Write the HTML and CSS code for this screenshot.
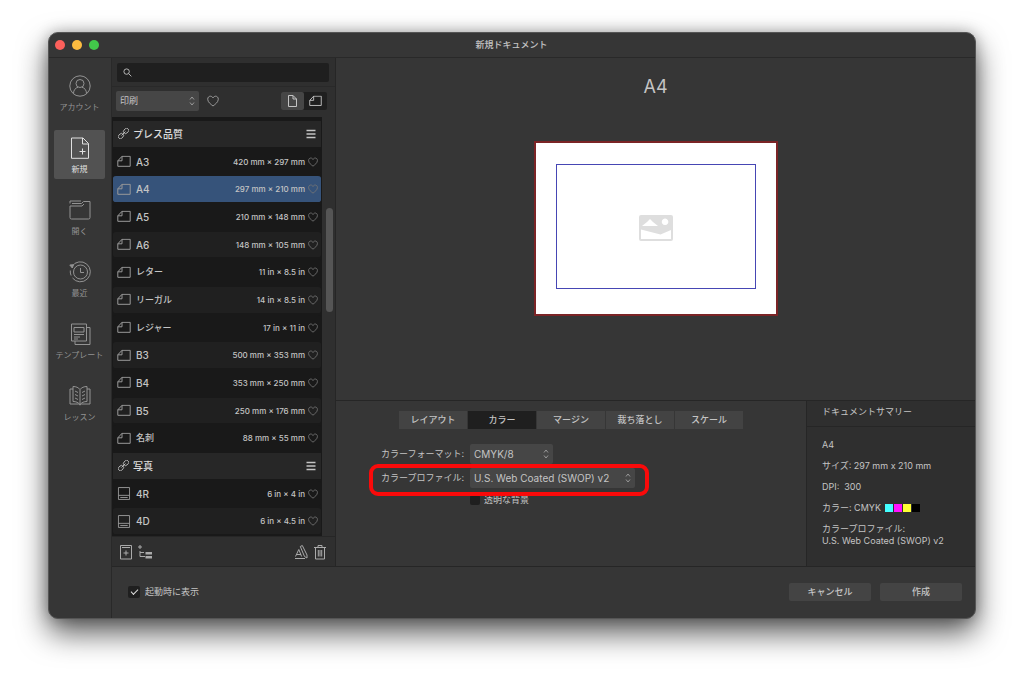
FILE: index.html
```
<!DOCTYPE html>
<html lang="ja">
  <head>
    <meta charset="UTF-8" />
    <meta name="viewport" content="width=device-width, initial-scale=1.0" />
    <title>新規ドキュメント</title>
    <link rel="stylesheet" href="styles.css">
  </head>
  <body>
    <!-- shared icons -->
    <svg class="sprite" aria-hidden="true">
      <symbol id="heart" viewBox="0 0 12 12">
        <path d="M6 11C4 9.400 .7 7.200 .7 4.200 .7 2.300 2 1.200 3.300 1.200c1.300 0 2.200.8 2.700 1.800.5-1 1.400-1.800 2.700-1.800C10 1.200 11.300 2.300 11.300 4.200c0 3-3.300 5.200-5.300 6.800z" />
      </symbol>
      <symbol id="landscape" viewBox="0 0 14 12">
        <path d="M5 .8h8.200v10H.8V5.300zM5 .8v4.500H.8" />
      </symbol>
      <symbol id="photo" viewBox="0 0 14 14">
        <path d="M1 .6h12v12.800H1zM1 9h12M3 11.300h8" />
      </symbol>
      <symbol id="link" viewBox="0 0 12 12">
        <g transform="rotate(-45 6 6)">
          <rect x="-1" y="3.800" width="6" height="4.400" rx="1.800" />
          <rect x="7" y="3.800" width="6" height="4.400" rx="1.800" />
          <path d="M3 6h6" />
        </g>
      </symbol>
      <symbol id="menu" viewBox="0 0 10 10">
        <path d="M.5 1.500h9M.5 5h9M.5 8.500h9" />
      </symbol>
    </svg>

    <div class="window">
      <header class="titlebar">
        <div class="lights">
          <span class="light close"></span>
          <span class="light minimize"></span>
          <span class="light zoom"></span>
        </div>
        <h1>新規ドキュメント</h1>
      </header>

      <div class="content">
        <nav class="sidebar">
          <button class="nav-item">
            <svg viewBox="0 0 22 22"><circle cx="11" cy="11" r="10.200" /><circle cx="11" cy="8.500" r="4" /><path d="M4.500 18.500c0-3.500 2-5.500 4.500-6.300M17.500 18.500c0-3.500-2-5.500-4.500-6.300" /></svg>
            アカウント
          </button>
          <button class="nav-item active">
            <svg viewBox="0 0 22 22"><path d="M2.500 1h11.500l5.500 5.500V21.300h-17zM13.500 1v6h6M13.500 11.500v6M10.500 14.500h6" /></svg>
            新規
          </button>
          <button class="nav-item">
            <svg viewBox="0 0 22 22"><path d="M1 4.500V2h11M3 4.500h9.500l2-2H21v16q0 1.500-1.500 1.500h-17Q1 20 1 18.500V7h12l2-2" /></svg>
            開く
          </button>
          <button class="nav-item">
            <svg viewBox="0 0 22 22"><circle cx="11.500" cy="11" r="7" /><path d="M11.500 7v4.500H15M3 5.300A10 10 0 1 1 3.500 17M1.300 9.500a10 10 0 0 0 .8 5" /><path d="M.8 4l3.700-.3L3.300 7z" fill="currentColor" /></svg>
            最近
          </button>
          <button class="nav-item">
            <svg viewBox="0 0 22 22"><path d="M2.500 1h15v17h-15zM5 4.500h10V9H5zM5 11.500h10M5 14h6M5 16h4M17.500 4.500h3.500v17H6V18" /></svg>
            テンプレート
          </button>
          <button class="nav-item">
            <svg viewBox="0 0 22 22"><path d="M11 4.500C9.500 2.500 7 1.500 4 1.500v15c3 0 5.500 1 7 3 1.500-2 4-3 7-3v-15c-3 0-5.500 1-7 3zM11 4.500v15M4 4H1v15h8.500l1.500 1 1.500-1H21V4h-3M6 6l3 1.500M6 9.500 9 11M6 13l3 1.500M16 6l-3 1.500M16 9.500 13 11M16 13l-3 1.500" /></svg>
            レッスン
          </button>
        </nav>

        <div class="workspace">
          <div class="upper">
            <section class="presets">
              <div class="search">
                <svg viewBox="0 0 10 10"><circle cx="4" cy="4" r="3" /><path d="M6.300 6.300 9.300 9.300" /></svg>
                <input type="search" aria-label="検索">
              </div>
              <div class="filter">
                <div class="select">
                  <select aria-label="カテゴリ">
                    <option>印刷</option>
                  </select>
                  <svg viewBox="0 0 6 10"><path d="M1 3.500l2-2.500 2 2.500M1 6.500l2 2.500 2-2.500" /></svg>
                </div>
                <button class="favorite" aria-label="お気に入り"><svg viewBox="0 0 12 12"><use href="#heart" /></svg></button>
                <div class="orientation">
                  <button class="on" aria-label="縦"><svg viewBox="0 0 12 14"><path d="M2 1.500h4.500l3.500 3.500v7.500H2zM6.500 1.500V5H10" /></svg></button>
                  <button aria-label="横"><svg viewBox="0 0 14 12"><use href="#landscape" /></svg></button>
                </div>
              </div>

              <div class="list-area">
                <ul class="list">
                  <li class="group"><svg class="link" viewBox="0 0 12 12"><use href="#link" /></svg><h2>プレス品質</h2><button class="menu" aria-label="メニュー"><svg viewBox="0 0 10 10"><use href="#menu" /></svg></button></li>
                  <li><svg class="page" viewBox="0 0 14 12"><use href="#landscape" /></svg><span class="name">A3</span><span class="size">420 mm × 297 mm</span><button class="like" aria-label="お気に入り"><svg viewBox="0 0 12 12"><use href="#heart" /></svg></button></li>
                  <li class="selected"><svg class="page" viewBox="0 0 14 12"><use href="#landscape" /></svg><span class="name">A4</span><span class="size">297 mm × 210 mm</span><button class="like" aria-label="お気に入り"><svg viewBox="0 0 12 12"><use href="#heart" /></svg></button></li>
                  <li><svg class="page" viewBox="0 0 14 12"><use href="#landscape" /></svg><span class="name">A5</span><span class="size">210 mm × 148 mm</span><button class="like" aria-label="お気に入り"><svg viewBox="0 0 12 12"><use href="#heart" /></svg></button></li>
                  <li><svg class="page" viewBox="0 0 14 12"><use href="#landscape" /></svg><span class="name">A6</span><span class="size">148 mm × 105 mm</span><button class="like" aria-label="お気に入り"><svg viewBox="0 0 12 12"><use href="#heart" /></svg></button></li>
                  <li><svg class="page" viewBox="0 0 14 12"><use href="#landscape" /></svg><span class="name jp">レター</span><span class="size">11 in × 8.5 in</span><button class="like" aria-label="お気に入り"><svg viewBox="0 0 12 12"><use href="#heart" /></svg></button></li>
                  <li><svg class="page" viewBox="0 0 14 12"><use href="#landscape" /></svg><span class="name jp">リーガル</span><span class="size">14 in × 8.5 in</span><button class="like" aria-label="お気に入り"><svg viewBox="0 0 12 12"><use href="#heart" /></svg></button></li>
                  <li><svg class="page" viewBox="0 0 14 12"><use href="#landscape" /></svg><span class="name jp">レジャー</span><span class="size">17 in × 11 in</span><button class="like" aria-label="お気に入り"><svg viewBox="0 0 12 12"><use href="#heart" /></svg></button></li>
                  <li><svg class="page" viewBox="0 0 14 12"><use href="#landscape" /></svg><span class="name">B3</span><span class="size">500 mm × 353 mm</span><button class="like" aria-label="お気に入り"><svg viewBox="0 0 12 12"><use href="#heart" /></svg></button></li>
                  <li><svg class="page" viewBox="0 0 14 12"><use href="#landscape" /></svg><span class="name">B4</span><span class="size">353 mm × 250 mm</span><button class="like" aria-label="お気に入り"><svg viewBox="0 0 12 12"><use href="#heart" /></svg></button></li>
                  <li><svg class="page" viewBox="0 0 14 12"><use href="#landscape" /></svg><span class="name">B5</span><span class="size">250 mm × 176 mm</span><button class="like" aria-label="お気に入り"><svg viewBox="0 0 12 12"><use href="#heart" /></svg></button></li>
                  <li><svg class="page" viewBox="0 0 14 12"><use href="#landscape" /></svg><span class="name jp">名刺</span><span class="size">88 mm × 55 mm</span><button class="like" aria-label="お気に入り"><svg viewBox="0 0 12 12"><use href="#heart" /></svg></button></li>
                  <li class="group"><svg class="link" viewBox="0 0 12 12"><use href="#link" /></svg><h2>写真</h2><button class="menu" aria-label="メニュー"><svg viewBox="0 0 10 10"><use href="#menu" /></svg></button></li>
                  <li><svg class="page" viewBox="0 0 14 14"><use href="#photo" /></svg><span class="name">4R</span><span class="size">6 in × 4 in</span><button class="like" aria-label="お気に入り"><svg viewBox="0 0 12 12"><use href="#heart" /></svg></button></li>
                  <li><svg class="page" viewBox="0 0 14 14"><use href="#photo" /></svg><span class="name">4D</span><span class="size">6 in × 4.5 in</span><button class="like" aria-label="お気に入り"><svg viewBox="0 0 12 12"><use href="#heart" /></svg></button></li>
                </ul>
                <div class="scroll">
                  <div class="thumb"></div>
                </div>
              </div>

              <div class="tools">
                <button aria-label="プリセットを追加"><svg viewBox="0 0 14 16"><path d="M1.500 1.500h11v13.500h-11zM3 3.500h8M7 6.500v5M4.500 9h5" /></svg></button>
                <button aria-label="カテゴリを追加"><svg viewBox="0 0 14 16"><path d="M2 1v4M0 3h4M2 7v5.500h5M2 8.500h4" /><path d="M7.500 8h6.500v2.500H7.500zM7.500 12H14v2.500H7.500z" fill="currentColor" stroke="none" /></svg></button>
                <button class="rename" aria-label="名前を変更"><svg viewBox="0 0 14 16"><path d="M1 14.500h10M1.500 12.500 4.800 5.500l2.800 7M2.500 10.500h4.500M6.300 2.500l2-1 4.700 9.500v3l-2.500-1.500z" /></svg></button>
                <button aria-label="削除"><svg viewBox="0 0 14 16"><path d="M1 3.500h12M5 3.500v-2h4v2M2.500 3.500v11.500h9V3.500M5.300 6v6.500M7 6v6.500M8.700 6v6.500" /></svg></button>
              </div>
            </section>

            <main class="main">
              <section class="preview">
                <h2>A4</h2>
                <div class="paper">
                  <div class="margins">
                    <svg viewBox="0 0 34 26"><path fill-rule="evenodd" d="M2 0h30q2 0 2 2v22q0 2-2 2H2q-2 0-2-2V2Q0 0 2 0zM3 11h16l-5-4-3-3-3 3zM26 3.500a3.300 3.300 0 1 0 .1 0zM2 14.500V24h30V15l-10.500 4.500z" /></svg>
                  </div>
                </div>
              </section>

              <div class="lower">
                <section class="settings">
                  <div class="tabs">
                    <button>レイアウト</button>
                    <button class="active">カラー</button>
                    <button>マージン</button>
                    <button>裁ち落とし</button>
                    <button>スケール</button>
                  </div>
                  <div class="form">
                    <label for="format">カラーフォーマット:</label>
                    <div class="select">
                      <select id="format">
                        <option>CMYK/8</option>
                      </select>
                      <svg viewBox="0 0 6 10"><path d="M1 3.500l2-2.500 2 2.500M1 6.500l2 2.500 2-2.500" /></svg>
                    </div>
                    <div class="profile">
                      <label for="profile">カラープロファイル:</label>
                      <div class="select wide">
                        <select id="profile">
                          <option>U.S. Web Coated (SWOP) v2</option>
                        </select>
                        <svg viewBox="0 0 6 10"><path d="M1 3.500l2-2.500 2 2.500M1 6.500l2 2.500 2-2.500" /></svg>
                      </div>
                      <span class="highlight"></span>
                    </div>
                    <div class="transparent">
                      <input type="checkbox" id="transparent">
                      <label for="transparent">透明な背景</label>
                    </div>
                  </div>
                </section>

                <aside class="summary">
                  <h2>ドキュメントサマリー</h2>
                  <div class="facts">
                    <p>A4</p>
                    <p>サイズ: 297 mm x 210 mm</p>
                    <p>DPI:&nbsp; 300</p>
                    <p class="colors">カラー: CMYK <span class="swatches"><i class="cyan"></i><i class="magenta"></i><i class="yellow"></i><i class="black"></i></span></p>
                    <p>カラープロファイル:<br>U.S. Web Coated (SWOP) v2</p>
                  </div>
                </aside>
              </div>
            </main>
          </div>

          <footer class="footer">
            <input type="checkbox" id="startup" checked>
            <label for="startup">起動時に表示</label>
            <button class="cancel">キャンセル</button>
            <button>作成</button>
          </footer>
        </div>
      </div>
    </div>
  </body>
</html>
```

FILE: styles.css
```
* {
  margin: 0;
  padding: 0;
  box-sizing: border-box;
}

body {
  display: flex;
  min-height: 100vh;
  padding: 32px 48px 64px;
  background: #fff;
  color: #c4c4c4;
  font-family: Inter, "Noto Sans CJK JP", sans-serif;
  font-size: 9px;
  line-height: 12px;
}
button,
input,
select {
  border: 0;
  outline: 0;
  background: none;
  color: inherit;
  font: inherit;
}
button {
  cursor: pointer;
}
svg {
  display: block;
  fill: none;
  stroke: currentColor;
  stroke-width: 1;
}
h1,
h2 {
  font-size: 9px;
  font-weight: 400;
}
.sprite {
  position: absolute;
  width: 0;
  height: 0;
}

.window {
  flex: 1;
  display: flex;
  flex-direction: column;
  min-width: 0;
  border: 1px solid #555;
  border-radius: 10px;
  background: #363636;
  box-shadow: 0 14px 30px rgba(0, 0, 0, 0.65), 0 0 14px rgba(0, 0, 0, 0.25);
  overflow: hidden;
}
.titlebar {
  display: grid;
  grid-template-columns: 1fr auto 1fr;
  align-items: center;
  height: 25px;
  padding: 0 7px 0 6px;
  border-bottom: 1px solid #292929;
}
.titlebar h1 {
  font-weight: 500;
}
.lights {
  display: flex;
  gap: 7px;
}
.light {
  width: 10px;
  height: 10px;
  border-radius: 50%;
}
.close {
  background: #fc605b;
}
.minimize {
  background: #fdbc40;
}
.zoom {
  background: #42c84a;
}
.content {
  flex: 1;
  display: flex;
}

/* left navigation */
.sidebar {
  display: flex;
  flex-direction: column;
  gap: 13px;
  width: 63px;
  padding: 10px 6px 10px 5px;
  border-right: 1px solid #292929;
}
.nav-item {
  display: flex;
  flex-direction: column;
  align-items: center;
  gap: 4px;
  height: 49px;
  padding-top: 7px;
  border-radius: 2px;
  color: #939393;
  font-size: 8px;
  line-height: 12px;
  white-space: nowrap;
}
.nav-item svg {
  width: 22px;
  height: 22px;
  flex-shrink: 0;
}
.nav-item.active {
  background: #525252;
  color: #e0e0e0;
}

.workspace {
  flex: 1;
  display: flex;
  flex-direction: column;
  min-width: 0;
}
.upper {
  flex: 1;
  display: flex;
}

/* preset list */
.presets {
  display: flex;
  flex-direction: column;
  width: 224px;
  border-right: 1px solid #262626;
  background: #2f2f2f;
}
.search {
  display: flex;
  align-items: center;
  gap: 6px;
  height: 19px;
  margin: 5px 6px 4px 5px;
  padding: 0 6px;
  border-radius: 2px;
  background: #1f1f1f;
}
.search svg {
  width: 9px;
  height: 9px;
}
.search input {
  flex: 1;
  min-width: 0;
}
.filter {
  display: flex;
  align-items: center;
  height: 31px;
  padding: 0 8px 2px 4px;
  border-top: 1px solid #292929;
}
.select {
  position: relative;
  width: 83px;
}
.select select {
  display: block;
  width: 100%;
  height: 20px;
  padding: 0 16px 0 4px;
  appearance: none;
  border-radius: 2px;
  background: #464646;
}
.select svg {
  position: absolute;
  top: 5px;
  right: 4px;
  width: 6px;
  height: 10px;
  color: #999;
  pointer-events: none;
}
.favorite {
  margin-left: 8px;
  color: #999;
}
.favorite svg {
  width: 12px;
  height: 12px;
}
.orientation {
  display: flex;
  margin-left: auto;
  border-radius: 2px;
  background: #1f1f1f;
}
.orientation button {
  display: flex;
  align-items: center;
  justify-content: center;
  width: 23px;
  height: 18px;
  border-radius: 2px;
}
.orientation svg {
  width: 13px;
  height: 14px;
}
.orientation .on {
  background: #464646;
}
.list-area {
  flex: 1;
  display: flex;
}
.list {
  flex: 1;
  display: flex;
  flex-direction: column;
  padding: 3px 1px 1px;
  background: #191919;
  list-style: none;
}
.list li {
  flex: 1 0 27px;
  display: flex;
  align-items: center;
  padding: 0 3px 0 4px;
  background: #202020;
  border-radius: 3px;
  background-clip: padding-box;
  border-top: 1px solid transparent;
  border-bottom: 1px solid transparent;
}
.list li:nth-child(even) {
  background-color: #191919;
}
.list li.group {
  gap: 4px;
  padding: 0 5px;
  border-radius: 0;
  background-color: #272727;
}
.list li.selected {
  background-color: #36537a;
}
.group h2 {
  flex: 1;
  font-size: 10px;
  font-weight: 500;
  color: #ddd;
}
.group .link {
  width: 11px;
  height: 11px;
}
.menu svg {
  width: 10px;
  height: 10px;
  stroke-width: 1.5;
}
.page {
  width: 14px;
  height: 13px;
  color: #999;
}
.name {
  flex: 1;
  margin-left: 5px;
  font-size: 10px;
  font-weight: 500;
}
.name.jp {
  font-size: 9px;
}
.size {
  margin-right: 3px;
  font-size: 8px;
  font-weight: 500;
}
.like {
  color: #777;
}
.like svg {
  width: 10px;
  height: 10px;
}
.scroll {
  width: 13px;
  padding: 91px 2px 0 4px;
}
.thumb {
  width: 7px;
  height: 104px;
  border-radius: 4px;
  background: #555;
}
.tools {
  display: flex;
  align-items: center;
  gap: 5px;
  height: 30px;
  padding: 0 8px 0 7px;
  border-top: 1px solid #262626;
  color: #aaa;
}
.tools svg {
  width: 14px;
  height: 16px;
}
.rename {
  margin-left: auto;
}

/* document preview */
.main {
  flex: 1;
  display: flex;
  flex-direction: column;
  min-width: 0;
}
.preview {
  flex: 1;
  display: flex;
  flex-direction: column;
  align-items: center;
  padding-top: 17px;
}
.preview h2 {
  margin-bottom: 42px;
  font-size: 18px;
  line-height: 24px;
}
.paper {
  width: 244px;
  height: 175px;
  padding: 21px 20px 25px;
  border: 2px solid #7b2426;
  background: #fff;
}
.margins {
  display: flex;
  align-items: center;
  justify-content: center;
  height: 100%;
  padding-top: 3px;
  border: 1px solid #4646b4;
}
.margins svg {
  width: 34px;
  height: 26px;
  fill: #dedede;
  stroke: none;
}

.lower {
  display: flex;
  height: 166px;
  border-top: 1px solid #262626;
}
.settings {
  flex: 1;
  display: flex;
  flex-direction: column;
  align-items: center;
  gap: 15px;
  padding-top: 10px;
}
.tabs {
  display: flex;
  gap: 1px;
}
.tabs button {
  width: 68px;
  height: 18px;
  background: #434343;
  font-weight: 500;
}
.tabs .active {
  background: #1f1f1f;
}
.form {
  display: grid;
  grid-template-columns: 87px 167px;
  column-gap: 6px;
  row-gap: 4px;
  align-items: center;
  width: 388px;
}
.form > label,
.profile label {
  text-align: right;
  white-space: nowrap;
}
.form select {
  font-size: 10px;
}
.form .wide {
  width: 165px;
}
.profile {
  position: relative;
  grid-column: 1 / 3;
  display: grid;
  grid-template-columns: subgrid;
  align-items: center;
}
/* red marker round the profile row */
.highlight {
  position: absolute;
  top: -4px;
  left: -8px;
  right: -12px;
  height: 32px;
  border: 4px solid #fa0a0a;
  border-radius: 9px;
  pointer-events: none;
}
.transparent {
  grid-column: 2;
  display: flex;
  align-items: center;
  gap: 4px;
  padding-top: 2px;
}
input[type="checkbox"] {
  width: 10px;
  height: 10px;
  appearance: none;
  border-radius: 2px;
  background: #1f1f1f;
}

/* summary */
.summary {
  width: 169px;
  border-left: 1px solid #262626;
  background: #2f2f2f;
}
.summary h2 {
  height: 26px;
  padding: 5px 15px;
  border-bottom: 1px solid #262626;
}
.facts {
  display: flex;
  flex-direction: column;
  gap: 9px;
  padding: 12px 15px;
}
.colors {
  display: flex;
  align-items: center;
  gap: 4px;
}
.swatches {
  display: flex;
  gap: 1px;
}
.swatches i {
  width: 8px;
  height: 8px;
}
.cyan {
  background: #4ff;
}
.magenta {
  background: #f1f;
}
.yellow {
  background: #ff3;
}
.black {
  background: #000;
}

/* bottom bar */
.footer {
  display: flex;
  align-items: center;
  height: 52px;
  padding: 0 13px 2px 16px;
  border-top: 1px solid #262626;
}
.footer input[type="checkbox"] {
  display: flex;
  align-items: center;
  justify-content: center;
  width: 12px;
  height: 12px;
  margin-right: 5px;
}
.footer input:checked::before {
  content: "";
  width: 6px;
  height: 3px;
  margin-bottom: 2px;
  border: solid #ddd;
  border-width: 0 0 1px 1px;
  transform: rotate(-45deg);
}
.footer button {
  width: 82px;
  height: 18px;
  border-radius: 2px;
  background: #444;
  font-weight: 500;
}
.footer .cancel {
  margin-left: auto;
  margin-right: 9px;
}
```
